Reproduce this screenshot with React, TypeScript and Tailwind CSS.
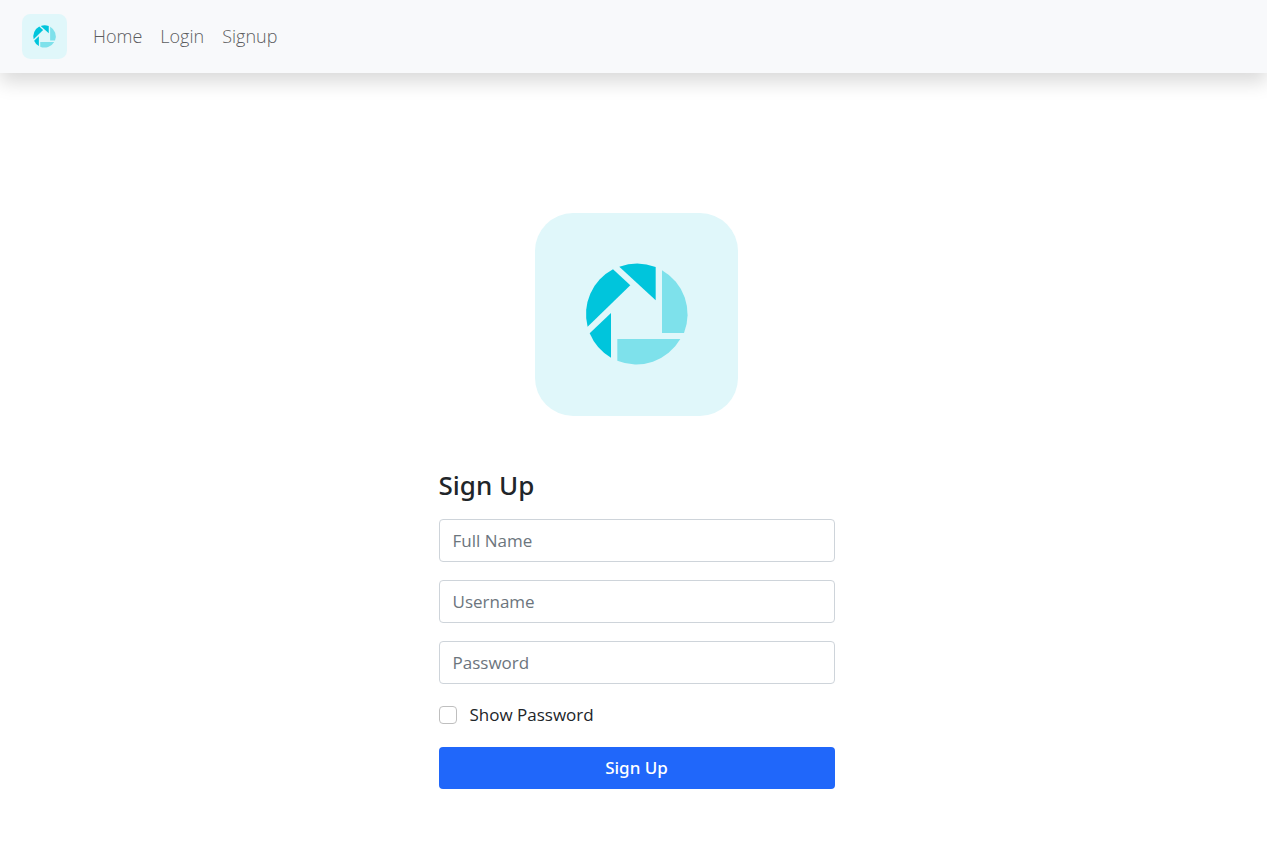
import { useState } from "react";

function Logo({ className }: { className?: string }) {
  return (
    <svg viewBox="0 0 203 203" className={className} role="img" aria-label="Logo">
      <rect width="203" height="203" rx="38" fill="#e0f7fa" />
      <g fill="#00c5dc">
        <path d="M84.3 53.8A50.7 50.7 0 0 1 120.7 54V87.3Z" />
        <path d="M78 56.3L95.3 72.3L52.6 113.8A50.7 50.7 0 0 1 78 56.3Z" />
        <path d="M54.7 120.3L76 100V144.7A50.7 50.7 0 0 1 54.7 120.3Z" />
      </g>
      <g fill="#7ee1eb">
        <path d="M127 57.2A50.7 50.7 0 0 1 149 120H127Z" />
        <path d="M82.3 126H145.3A50.7 50.7 0 0 1 82.3 147.8Z" />
      </g>
    </svg>
  );
}

const links = ["Home", "Login", "Signup"];

const field =
  "h-[43px] w-full rounded-[4px] border border-[#ced4da] bg-white px-[13px] text-[17px] text-[#212529] outline-none placeholder:text-[#6c757d] focus:border-[#86b7fe]";

export default function App() {
  const [show, setShow] = useState(false);
  return (
    <div className="min-h-screen bg-white font-['Segoe_UI','Open_Sans',sans-serif] text-[17px] text-[#212529]">
      <header className="flex h-[73px] items-center bg-[#f8f9fb] px-[22px] shadow-[0_9px_18px_rgba(0,0,0,0.15)]">
        <a href="#home" aria-label="Brand">
          <Logo className="block size-[45px]" />
        </a>
        <nav className="ml-[26px] flex gap-[18px] text-[18px]">
          {links.map((l) => (
            <a key={l} href={`#${l.toLowerCase()}`} className="font-light text-[#5c5d5f]">
              {l}
            </a>
          ))}
        </nav>
      </header>
      <main className="flex flex-col items-center pt-[140px] pl-1.5">
        <Logo className="block size-[203px]" />
        <form
          className="mt-[50px] flex w-full max-w-[396px] flex-col gap-[18px]"
          onSubmit={(e) => e.preventDefault()}
        >
          <h1 className="-mb-1 font-['Segoe_UI','Noto_Sans',sans-serif] text-[26px] leading-[39px] font-medium">
            Sign Up
          </h1>
          <input className={field} type="text" placeholder="Full Name" aria-label="Full Name" />
          <input className={field} type="text" placeholder="Username" aria-label="Username" />
          <input
            className={field}
            type={show ? "text" : "password"}
            placeholder="Password"
            aria-label="Password"
          />
          <label className="flex h-[26px] items-center gap-[13px]">
            <input
              type="checkbox"
              checked={show}
              onChange={(e) => setShow(e.target.checked)}
              className="size-[18px] appearance-none rounded-[4px] border border-[#bfbfbf] bg-white checked:border-[#2067fa] checked:bg-[#2067fa]"
            />
            Show Password
          </label>
          <button
            type="submit"
            className="mt-px h-[42px] w-full rounded-[4px] bg-[#2067fa] font-['Segoe_UI','Noto_Sans',sans-serif] font-medium text-white"
          >
            Sign Up
          </button>
        </form>
      </main>
    </div>
  );
}
